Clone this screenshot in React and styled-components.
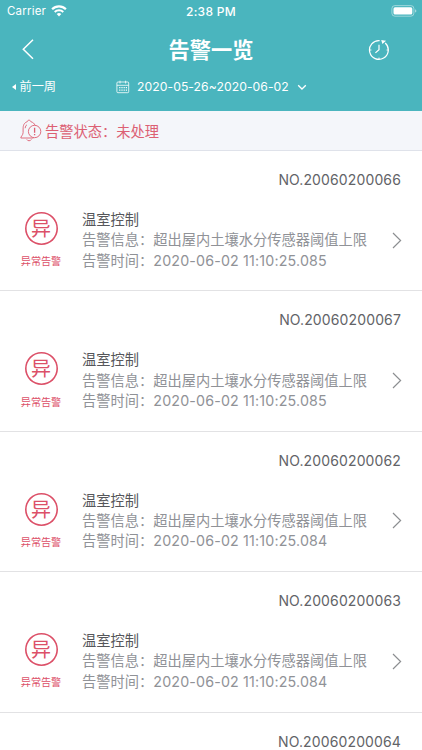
import React from 'react'
import styled, { createGlobalStyle } from 'styled-components'

const alarms = [
  { no: '20060200066', time: '2020-06-02 11:10:25.085' },
  { no: '20060200067', time: '2020-06-02 11:10:25.085' },
  { no: '20060200062', time: '2020-06-02 11:10:25.084' },
  { no: '20060200063', time: '2020-06-02 11:10:25.084' },
]

const nextAlarmNo = '20060200064'

function WifiIcon() {
  return (
    <svg width='16' height='12' viewBox='0 0 16 12' fill='none' stroke='#fff'>
      <path d='M1.1 4.3a9.8 9.8 0 0 1 13.8 0' strokeWidth='2.2' />
      <path d='M3.7 7a6.1 6.1 0 0 1 8.6 0' strokeWidth='1.9' />
      <path d='M8 11.4L5.7 9.1a3.3 3.3 0 0 1 4.6 0z' fill='#fff' stroke='none' />
    </svg>
  )
}

function BatteryIcon() {
  return (
    <svg width='26' height='12' viewBox='0 0 26 12' fill='none'>
      <rect x='0.9' y='0.6' width='22' height='10.6' rx='3' stroke='#fff' strokeOpacity='0.45' />
      <rect x='2.5' y='2.2' width='18.8' height='7.4' rx='1.5' fill='#fff' />
      <path d='M24.2 4.2c1.5.6 1.5 2.8 0 3.4z' fill='#fff' fillOpacity='0.6' />
    </svg>
  )
}

function BackIcon() {
  return (
    <svg width='12' height='21' viewBox='0 0 12 21' fill='none' stroke='#fff' strokeWidth='1.5'>
      <path d='M11 .8L1.3 10.3L11 19.8' />
    </svg>
  )
}

function HistoryIcon() {
  return (
    <svg width='22' height='22' viewBox='0 0 22 22' fill='none' stroke='#fff' strokeWidth='1.2'>
      <path d='M11.6 1.6A9.4 9.4 0 1 0 17.2 4' />
      <path d='M13.2.9l4.8.8-3.6 3.3z' fill='#fff' stroke='none' />
      <path d='M11 5.8v4.9l-3.6 3.2' />
      <path d='M1.8 11h1.6M18.6 11h1.6M11 18.6v1.6' strokeWidth='1' />
    </svg>
  )
}

function CalendarIcon() {
  return (
    <svg width='14' height='14' viewBox='0 0 14 14' fill='none' stroke='#fff' strokeWidth='0.8'>
      <rect x='0.9' y='2' width='11.8' height='10.7' rx='1' />
      <path d='M.9 5.3h11.8M4 .7v2.8M9.6 .7v2.8' />
      <path d='M3.2 7.6h8M3.2 10.2h8' strokeWidth='1.2' strokeDasharray='1.2 1' />
    </svg>
  )
}

function DownIcon() {
  return (
    <svg width='10' height='7' viewBox='0 0 10 7' fill='none' stroke='#fff' strokeWidth='1.3'>
      <path d='M1.2 1.2L5 5L8.8 1.2' />
    </svg>
  )
}

function BellIcon() {
  return (
    <svg width='22' height='23' viewBox='0 0 22 23' fill='none' stroke='#dc6073' strokeWidth='0.9'>
      <path d='M7.3 2.7C7.4.7 10.6.7 10.8 2.7M7.3 2.7C3.9 3.8 3.1 6.5 3.1 10v3.6c0 2.5-2.4 4-2.3 5.4h12.7M10.8 2.7c2.2.6 3.6 1.8 4.2 3.6' />
      <path d='M6.8 20.4c.7 1.8 3.8 1.8 4.6 0M5.2 9.2c.1-1.7.7-2.8 1.8-3.5' />
      <circle cx='14.6' cy='12.5' r='6.2' />
      <path d='M14.6 8.7v5M14.6 14.9v1.4' strokeWidth='1.3' />
    </svg>
  )
}

function ArrowIcon() {
  return (
    <svg width='10' height='17' viewBox='0 0 10 17' fill='none' stroke='#8c8e91' strokeWidth='1.2'>
      <path d='M1 1l7.6 7.5L1 16' />
    </svg>
  )
}

function AlarmItem({ alarm }) {
  return (
    <Item>
      <ItemNumber>NO.{alarm.no}</ItemNumber>
      <ItemBody>
        <Kind>
          <KindBadge>异</KindBadge>
          <KindLabel>异常告警</KindLabel>
        </Kind>
        <Details>
          <DeviceName>温室控制</DeviceName>
          <DetailLine>告警信息：超出屋内土壤水分传感器阈值上限</DetailLine>
          <DetailLine>
            告警时间：<Digits>{alarm.time}</Digits>
          </DetailLine>
        </Details>
        <ArrowIcon />
      </ItemBody>
    </Item>
  )
}

export default function App() {
  return (
    <Screen>
      <GlobalStyle />
      <Header>
        <StatusBar>
          <Carrier>
            Carrier
            <WifiIcon />
          </Carrier>
          <Clock>2:38 PM</Clock>
          <BatteryIcon />
        </StatusBar>
        <NavBar>
          <BackIcon />
          <Title>告警一览</Title>
          <HistoryIcon />
        </NavBar>
        <FilterBar>
          <PrevWeek>前一周</PrevWeek>
          <DateRange>
            <CalendarIcon />
            <DateText>2020-05-26~2020-06-02</DateText>
            <DownIcon />
          </DateRange>
        </FilterBar>
      </Header>
      <StateBar>
        <BellIcon />
        告警状态：未处理
      </StateBar>
      {alarms.map((alarm) => (
        <AlarmItem key={alarm.no} alarm={alarm} />
      ))}
      <PartialItem>
        <ItemNumber>NO.{nextAlarmNo}</ItemNumber>
      </PartialItem>
    </Screen>
  )
}

const GlobalStyle = createGlobalStyle`
  body {
    margin: 0;
    overflow: hidden;
  }
  * {
    box-sizing: border-box;
  }
  svg {
    display: block;
    flex-shrink: 0;
  }
`

const Screen = styled.div`
  width: 422px;
  height: 750px;
  overflow: hidden;
  background-color: #fff;
  font-family: Inter, 'Noto Sans CJK SC', sans-serif;
  white-space: nowrap;
`

const Header = styled.header`
  height: 111px;
  background-color: #4ab5be;
  color: #fff;
`

const StatusBar = styled.div`
  display: grid;
  grid-template-columns: 1fr auto 1fr;
  align-items: center;
  height: 22px;
  padding: 0 5px 0 7px;
  font-size: 11.5px;

  > :last-child {
    justify-self: end;
  }
`

const Carrier = styled.div`
  display: flex;
  align-items: center;
  gap: 5px;
  letter-spacing: 0.2px;
`

const Clock = styled.div`
  padding-right: 2px;
  font-weight: 500;
  font-size: 12px;
  letter-spacing: 0.3px;
`

const NavBar = styled.div`
  display: grid;
  grid-template-columns: 22px 1fr 22px;
  justify-items: center;
  align-items: center;
  height: 55px;
  padding: 0 32px 0 22px;

  > :first-child {
    justify-self: start;
  }
`

const Title = styled.h1`
  margin: 0;
  padding-left: 10px;
  font-size: 21.2px;
  line-height: 30px;
  font-weight: 700;
`

const FilterBar = styled.div`
  display: flex;
  align-items: center;
  height: 20px;
  padding-left: 12px;
  font-size: 12.2px;
  line-height: 20px;
`

const PrevWeek = styled.div`
  display: flex;
  align-items: center;
  gap: 3.5px;
  width: 104px;

  &::before {
    content: '';
    border: 3px solid transparent;
    border-right: 4.5px solid #fff;
    border-left: none;
  }
`

const DateRange = styled.div`
  display: flex;
  align-items: center;
`

const DateText = styled.span`
  margin: 0 8px 0 7px;
  letter-spacing: 0.06px;
`

const StateBar = styled.div`
  display: flex;
  align-items: center;
  gap: 3px;
  height: 40px;
  padding-left: 20px;
  border-bottom: 1px solid #dfe2ea;
  background-color: #f4f6fa;
  color: #dc6073;
  font-size: 14.25px;
`

const Item = styled.section`
  height: 140.4px;
  padding-top: 18px;
  border-bottom: 1px solid #e2e2e4;
`

const PartialItem = styled.section`
  height: 37px;
  padding-top: 18px;
`

const ItemNumber = styled.div`
  height: 22px;
  padding-right: 21px;
  text-align: right;
  font-size: 14px;
  line-height: 22px;
  letter-spacing: 0.13px;
  color: #626367;
`

const ItemBody = styled.div`
  display: flex;
  align-items: center;
  height: 98px;
  padding: 0 20px;
`

const Kind = styled.div`
  display: flex;
  flex-direction: column;
  align-items: center;
  gap: 9.5px;
  width: 42px;
  margin-right: 20px;
  color: #dc5068;
`

const KindBadge = styled.div`
  display: flex;
  justify-content: center;
  width: 33px;
  height: 33px;
  box-shadow: inset 0 0 0 1.6px #dc5068;
  border-radius: 50%;
  font-size: 20px;
  line-height: 34px;
`

const KindLabel = styled.div`
  font-size: 10.1px;
  line-height: 14px;
`

const Details = styled.div`
  flex: 1;
  padding-top: 1px;
  font-size: 14.25px;
  line-height: 20.4px;
`

const DeviceName = styled.div`
  color: #55565a;
`

const DetailLine = styled.div`
  color: #909297;
`

const Digits = styled.span`
  letter-spacing: 0.17px;
`
